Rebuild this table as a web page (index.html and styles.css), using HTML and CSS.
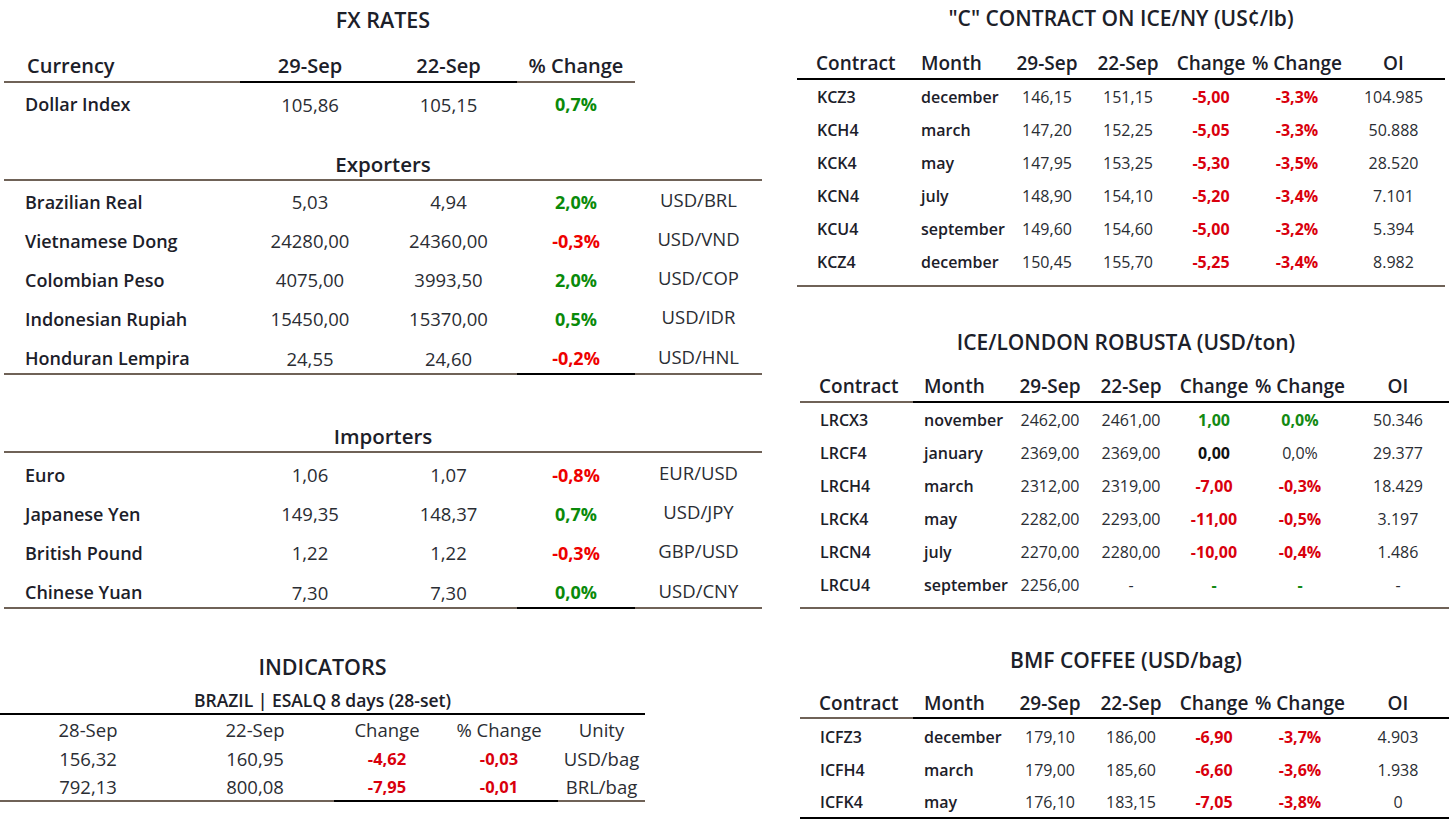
FILE: index.html
```html
<!DOCTYPE html>
<html lang="en">
<head>
<meta charset="utf-8">
<title>Market Report</title>
<link rel="stylesheet" href="styles.css">
</head>
<body>
<div class="page">
  <section class="left">
    <div class="fx">
      <h1 class="title fx-title">FX RATES</h1>
      <div class="fx-row fx-head">
        <div class="c lbl b-br">Currency</div>
        <div class="c ctr b-bk">29-Sep</div>
        <div class="c ctr b-bk">22-Sep</div>
        <div class="c ctr b-br">% Change</div>
      </div>
      <div class="fx-row fx-single">
        <div class="c lbl">Dollar Index</div>
        <div class="c ctr num">105,86</div>
        <div class="c ctr num">105,15</div>
        <div class="c ctr up">0,7%</div>
        <div class="c ctr pair"></div>
      </div>

      <h2 class="sub sub-exp">Exporters</h2>
      <div class="fx-body">
        <div class="fx-row"><div class="c lbl">Brazilian Real</div><div class="c ctr num">5,03</div><div class="c ctr num">4,94</div><div class="c ctr up">2,0%</div><div class="c ctr pair">USD/BRL</div></div>
        <div class="fx-row"><div class="c lbl">Vietnamese Dong</div><div class="c ctr num">24280,00</div><div class="c ctr num">24360,00</div><div class="c ctr down">-0,3%</div><div class="c ctr pair">USD/VND</div></div>
        <div class="fx-row"><div class="c lbl">Colombian Peso</div><div class="c ctr num">4075,00</div><div class="c ctr num">3993,50</div><div class="c ctr up">2,0%</div><div class="c ctr pair">USD/COP</div></div>
        <div class="fx-row"><div class="c lbl">Indonesian Rupiah</div><div class="c ctr num">15450,00</div><div class="c ctr num">15370,00</div><div class="c ctr up">0,5%</div><div class="c ctr pair">USD/IDR</div></div>
        <div class="fx-row last"><div class="c lbl b-br">Honduran Lempira</div><div class="c ctr num b-br">24,55</div><div class="c ctr num b-br">24,60</div><div class="c ctr down b-bk">-0,2%</div><div class="c ctr pair b-br">USD/HNL</div></div>
      </div>

      <h2 class="sub sub-imp">Importers</h2>
      <div class="fx-body imp-body">
        <div class="fx-row"><div class="c lbl">Euro</div><div class="c ctr num">1,06</div><div class="c ctr num">1,07</div><div class="c ctr down">-0,8%</div><div class="c ctr pair">EUR/USD</div></div>
        <div class="fx-row"><div class="c lbl">Japanese Yen</div><div class="c ctr num">149,35</div><div class="c ctr num">148,37</div><div class="c ctr up">0,7%</div><div class="c ctr pair">USD/JPY</div></div>
        <div class="fx-row"><div class="c lbl">British Pound</div><div class="c ctr num">1,22</div><div class="c ctr num">1,22</div><div class="c ctr down">-0,3%</div><div class="c ctr pair">GBP/USD</div></div>
        <div class="fx-row last"><div class="c lbl b-br">Chinese Yuan</div><div class="c ctr num b-br">7,30</div><div class="c ctr num b-br">7,30</div><div class="c ctr up b-bk">0,0%</div><div class="c ctr pair b-br">USD/CNY</div></div>
      </div>
    </div>

    <div class="ind">
      <h1 class="title ind-title">INDICATORS</h1>
      <h2 class="ind-sub">BRAZIL | ESALQ 8 days (28-set)</h2>
      <div class="ind-row"><div class="c">28-Sep</div><div class="c">22-Sep</div><div class="c">Change</div><div class="c">% Change</div><div class="c">Unity</div></div>
      <div class="ind-row"><div class="c">156,32</div><div class="c">160,95</div><div class="c down2">-4,62</div><div class="c down2">-0,03</div><div class="c">USD/bag</div></div>
      <div class="ind-row last"><div class="c b-br">792,13</div><div class="c b-br">800,08</div><div class="c down2 b-bk">-7,95</div><div class="c down2 b-bk">-0,01</div><div class="c b-br">BRL/bag</div></div>
    </div>
  </section>

  <section class="right">
    <div class="fut fut-c">
      <h1 class="title t-c">"C" CONTRACT ON ICE/NY (US¢/lb)</h1>
      <div class="f-row f-head">
        <div class="c l1 b-bk">Contract</div><div class="c l2 b-bk">Month</div><div class="c b-bk">29-Sep</div><div class="c b-bk">22-Sep</div><div class="c b-bk">Change</div><div class="c b-bk">% Change</div><div class="c b-bk">OI</div>
      </div>
      <div class="f-body">
        <div class="f-row"><div class="c l1 code">KCZ3</div><div class="c l2 mon">december</div><div class="c">146,15</div><div class="c">151,15</div><div class="c down2">-5,00</div><div class="c down2">-3,3%</div><div class="c">104.985</div></div>
        <div class="f-row"><div class="c l1 code">KCH4</div><div class="c l2 mon">march</div><div class="c">147,20</div><div class="c">152,25</div><div class="c down2">-5,05</div><div class="c down2">-3,3%</div><div class="c">50.888</div></div>
        <div class="f-row"><div class="c l1 code">KCK4</div><div class="c l2 mon">may</div><div class="c">147,95</div><div class="c">153,25</div><div class="c down2">-5,30</div><div class="c down2">-3,5%</div><div class="c">28.520</div></div>
        <div class="f-row"><div class="c l1 code">KCN4</div><div class="c l2 mon">july</div><div class="c">148,90</div><div class="c">154,10</div><div class="c down2">-5,20</div><div class="c down2">-3,4%</div><div class="c">7.101</div></div>
        <div class="f-row"><div class="c l1 code">KCU4</div><div class="c l2 mon">september</div><div class="c">149,60</div><div class="c">154,60</div><div class="c down2">-5,00</div><div class="c down2">-3,2%</div><div class="c">5.394</div></div>
        <div class="f-row"><div class="c l1 code">KCZ4</div><div class="c l2 mon">december</div><div class="c">150,45</div><div class="c">155,70</div><div class="c down2">-5,25</div><div class="c down2">-3,4%</div><div class="c">8.982</div></div>
      </div>
    </div>

    <div class="fut fut-r">
      <h1 class="title t-r">ICE/LONDON ROBUSTA (USD/ton)</h1>
      <div class="f-row f-head">
        <div class="c l1 b-br">Contract</div><div class="c l2 b-bk">Month</div><div class="c b-bk">29-Sep</div><div class="c b-bk">22-Sep</div><div class="c b-bk">Change</div><div class="c b-bk">% Change</div><div class="c b-bk">OI</div>
      </div>
      <div class="f-body">
        <div class="f-row"><div class="c l1 code">LRCX3</div><div class="c l2 mon">november</div><div class="c">2462,00</div><div class="c">2461,00</div><div class="c up2">1,00</div><div class="c up2">0,0%</div><div class="c">50.346</div></div>
        <div class="f-row"><div class="c l1 code">LRCF4</div><div class="c l2 mon">january</div><div class="c">2369,00</div><div class="c">2369,00</div><div class="c zero">0,00</div><div class="c">0,0%</div><div class="c">29.377</div></div>
        <div class="f-row"><div class="c l1 code">LRCH4</div><div class="c l2 mon">march</div><div class="c">2312,00</div><div class="c">2319,00</div><div class="c down2">-7,00</div><div class="c down2">-0,3%</div><div class="c">18.429</div></div>
        <div class="f-row"><div class="c l1 code">LRCK4</div><div class="c l2 mon">may</div><div class="c">2282,00</div><div class="c">2293,00</div><div class="c down2">-11,00</div><div class="c down2">-0,5%</div><div class="c">3.197</div></div>
        <div class="f-row"><div class="c l1 code">LRCN4</div><div class="c l2 mon">july</div><div class="c">2270,00</div><div class="c">2280,00</div><div class="c down2">-10,00</div><div class="c down2">-0,4%</div><div class="c">1.486</div></div>
        <div class="f-row"><div class="c l1 code">LRCU4</div><div class="c l2 mon">september</div><div class="c">2256,00</div><div class="c">-</div><div class="c up2">-</div><div class="c up2">-</div><div class="c">-</div></div>
      </div>
    </div>

    <div class="fut fut-b">
      <h1 class="title t-b">BMF COFFEE (USD/bag)</h1>
      <div class="f-row f-head">
        <div class="c l1 b-br">Contract</div><div class="c l2 b-bk">Month</div><div class="c b-bk">29-Sep</div><div class="c b-bk">22-Sep</div><div class="c b-bk">Change</div><div class="c b-bk">% Change</div><div class="c b-bk">OI</div>
      </div>
      <div class="f-body">
        <div class="f-row"><div class="c l1 code">ICFZ3</div><div class="c l2 mon">december</div><div class="c">179,10</div><div class="c">186,00</div><div class="c down2">-6,90</div><div class="c down2">-3,7%</div><div class="c">4.903</div></div>
        <div class="f-row"><div class="c l1 code">ICFH4</div><div class="c l2 mon">march</div><div class="c">179,00</div><div class="c">185,60</div><div class="c down2">-6,60</div><div class="c down2">-3,6%</div><div class="c">1.938</div></div>
        <div class="f-row"><div class="c l1 code">ICFK4</div><div class="c l2 mon">may</div><div class="c">176,10</div><div class="c">183,15</div><div class="c down2">-7,05</div><div class="c down2">-3,8%</div><div class="c">0</div></div>
      </div>
    </div>
  </section>
</div>
</body>
</html>
```

FILE: styles.css
```css
* { box-sizing: border-box; margin: 0; padding: 0; }
html, body { width: 1449px; height: 819px; overflow: hidden; background: #fff; }
body {
  font-family: "Open Sans", "Liberation Sans", sans-serif;
  color: #1c2029;
}
.page { display: flex; gap: 35px; width: 1449px; height: 819px; }
.left { width: 762px; flex: none; }
.right { width: 652px; flex: none; }

.title {
  font-size: 21px;
  font-weight: 600;
  text-align: center;
  line-height: 24px;
  color: #1c2029;
}
.sub {
  font-size: 20.5px;
  font-weight: 600;
  text-align: center;
  line-height: 22px;
  padding-bottom: 4px;
  border-bottom: 2px solid #6f6257;
}

/* ---------- FX RATES ---------- */
.fx { margin-left: 4px; width: 758px; }
.fx-title { padding-top: 8px; height: 40px; font-size: 21.5px; }
.fx-row {
  display: grid;
  grid-template-columns: 236px 140px 137px 118px 127px;
  height: 39px;
  align-items: center;
  font-size: 18px;
}
.fx-row .c { height: 100%; display: flex; align-items: center; white-space: nowrap; }
.fx-row .ctr { justify-content: center; }
.fx-row .lbl { padding-left: 21px; font-weight: 600; }
.fx-head {
  grid-template-columns: 236px 140px 137px 118px;
  height: 43px;
  font-size: 20px;
  font-weight: 600;
}
.fx-head .lbl { padding-left: 23px; }
.fx-head .c { align-items: flex-end; padding-bottom: 2px; border-bottom: 2px solid #000; }
.fx-single { height: 42px; }
.num { font-weight: 400; color: #2a2d33; font-size: 18.5px; }
.pair { font-weight: 400; color: #2a2d33; padding-bottom: 4px; font-size: 18.5px; }
.up { color: #0a8a0a; font-weight: 700; }
.down { color: #ee0000; font-weight: 700; }
.up2 { color: #138a13; font-weight: 700; }
.down2 { color: #d9000d; font-weight: 700; }
.zero { font-weight: 700; color: #111; }

.sub-exp { padding-top: 28px; }
.sub-imp { padding-top: 51px; }
.fx-body { padding-top: 1px; }
.imp-body { padding-top: 2px; }
.fx-row.last { height: 36px; }
.fx-row.last .c { align-items: flex-start; padding-top: 8px; border-bottom: 2px solid #6f6257; }
.fx-row.last .c.pair { padding-top: 6px; }

.b-br { border-bottom-color: #6f6257 !important; border-bottom: 2px solid #6f6257; }
.b-bk { border-bottom-color: #000 !important; border-bottom: 2px solid #000; }

/* ---------- INDICATORS ---------- */
.ind { width: 645px; }
.ind-title { padding-top: 47px; height: 71px; font-size: 21.5px; }
.ind-sub {
  font-size: 17.5px;
  font-weight: 600;
  text-align: center;
  line-height: 22px;
  padding-top: 10px;
  padding-bottom: 2px;
  border-bottom: 2px solid #000;
}
.ind-row {
  display: grid;
  grid-template-columns: 176px 158px 106px 118px 87px;
  height: 29px;
  font-size: 18.5px;
  font-weight: 400;
  color: #2a2d33;
}
.ind-row .c { display: flex; align-items: center; justify-content: center; white-space: nowrap; }
.ind-row .down2 { font-size: 16.5px; }
.ind-row.last .c { border-bottom: 2px solid #6f6257; }

/* ---------- FUTURES ---------- */
.fut-c { width: 648px; }
.fut-r, .fut-b { width: 652px; margin-left: 3px; }
.f-row {
  display: grid;
  grid-template-columns: 113px 98px 78px 84px 82px 90px 103px;
  height: 33px;
  font-size: 16px;
  color: #2a2d33;
}
.fut-r .f-row, .fut-b .f-row { grid-template-columns: 113px 98px 78px 84px 82px 90px 106px; }
.f-row .c { display: flex; align-items: center; justify-content: center; white-space: nowrap; }
.f-row .l1 { justify-content: flex-start; padding-left: 20px; }
.f-row .l2 { justify-content: flex-start; padding-left: 11px; }
.code, .mon { font-weight: 600; color: #1c2029; }
.f-head { height: auto; font-size: 19px; font-weight: 600; color: #1c2029; }
.f-head .c { align-items: flex-end; line-height: 22px; padding-bottom: 4px; }
.f-head .l1 { padding-left: 19px; }
.f-body { border-bottom: 2px solid #6f6257; }

.t-c { height: 36px; line-height: 36px; }
.fut-c .f-head .c { padding-top: 16px; }
.fut-c .f-body { padding-bottom: 7px; }

.t-r { padding-top: 43px; height: 67px; }
.fut-r .f-head .c { padding-top: 21px; }
.fut-r .f-body { padding-bottom: 6px; }

.t-b { padding-top: 39px; height: 63px; }
.fut-b .f-head .c { padding-top: 20px; padding-bottom: 3px; }
.fut-b .f-body { padding-top: 1px; border-bottom-color: #000; }
.fut-b .f-body .f-row:last-child { height: 31px; }
.fut-b .f-body .f-row:last-child .c { align-items: flex-start; padding-top: 5px; }
```
